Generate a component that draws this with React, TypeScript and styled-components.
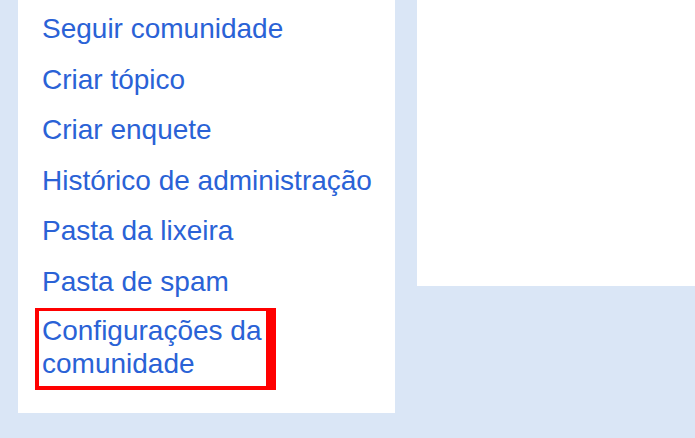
import React from "react";
import styled, { createGlobalStyle } from "styled-components";

const Global = createGlobalStyle`
  html, body { margin: 0; padding: 0; background: #dae6f6; }
  body { font-family: "Liberation Sans", Arial, sans-serif; }
`;

const Page = styled.div`
  display: flex;
  align-items: flex-start;
  gap: 22px;
  padding-left: 18px;
  width: 695px;
  height: 438px;
  box-sizing: border-box;
  overflow: hidden;
`;

const SidePanel = styled.nav`
  width: 377px;
  flex: none;
  background: #ffffff;
  box-sizing: border-box;
  padding: 12px 0 23px 24px;
`;

const MenuList = styled.ul`
  list-style: none;
  margin: 0;
  padding: 0;
  display: flex;
  flex-direction: column;
  gap: 17.5px;
`;

const MenuItem = styled.li``;

const MenuLink = styled.a<{ $highlight?: boolean }>`
  display: ${(p) => (p.$highlight ? "block" : "inline")};
  font-size: 28px;
  line-height: 33px;
  color: #2a62d6;
  text-decoration: none;
  cursor: pointer;
  ${(p) =>
    p.$highlight &&
    `
    width: 224px;
    margin: -7px 0 0 -7px;
    border-style: solid;
    border-color: #ff0000;
    border-width: 3px 10px 4px 4px;
    padding: 3px 0 6px 3px;
  `}
`;

const ContentPanel = styled.main`
  flex: 1;
  height: 286px;
  background: #ffffff;
`;

const items = [
  "Seguir comunidade",
  "Criar tópico",
  "Criar enquete",
  "Histórico de administração",
  "Pasta da lixeira",
  "Pasta de spam",
];

export default function App() {
  return (
    <>
      <Global />
      <Page>
        <SidePanel>
          <MenuList>
            {items.map((t) => (
              <MenuItem key={t}>
                <MenuLink>{t}</MenuLink>
              </MenuItem>
            ))}
            <MenuItem>
              <MenuLink $highlight>Configurações da comunidade</MenuLink>
            </MenuItem>
          </MenuList>
        </SidePanel>
        <ContentPanel />
      </Page>
    </>
  );
}
